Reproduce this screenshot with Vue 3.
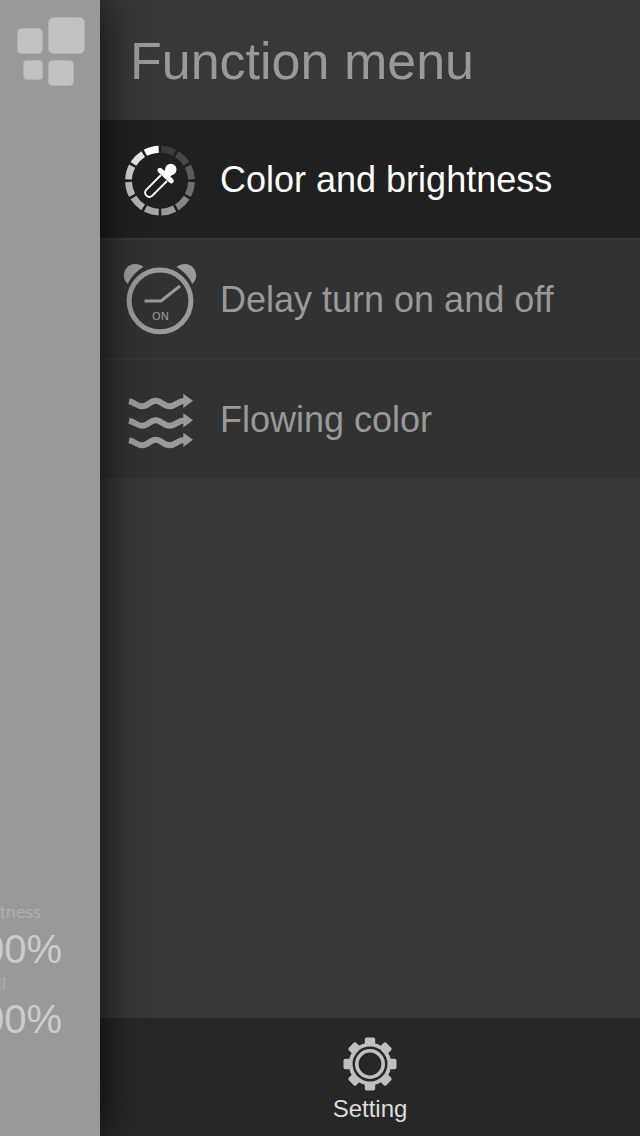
<script setup>
import { ref } from 'vue'

const active = ref('color')
const items = [
  { id: 'color', label: 'Color and brightness' },
  { id: 'delay', label: 'Delay turn on and off' },
  { id: 'flow', label: 'Flowing color' },
]
const readouts = [
  { id: 'brightness', label: 'Brightness', value: '100%' },
  { id: 'overall', label: 'Overall', value: '100%' },
]
const segments = [
  '#3c3c3c', '#484848', '#5a5a5a', '#707070', '#868686', '#999999',
  '#a6a6a6', '#b2b2b2', '#c0c0c0', '#d2d2d2', '#e8e8e8', '#ffffff',
]
const waves = [22, 41.5, 61]
const teeth = [0, 45, 90, 135, 180, 225, 270, 315]
</script>

<template>
  <div class="screen">
    <section class="page" aria-label="Current page">
      <button class="toggle" type="button" aria-label="Toggle menu">
        <svg width="70" height="70" viewBox="0 0 70 70" fill="#c2c2c2" stroke="#b2b2b2" stroke-width="1">
          <rect x="2.5" y="13.5" width="25" height="25" rx="4" />
          <rect x="33.5" y="2.5" width="36" height="36" rx="5" />
          <rect x="8.5" y="45.5" width="19" height="19" rx="3" />
          <rect x="33.5" y="45.5" width="25" height="25" rx="4" />
        </svg>
      </button>
      <dl class="readouts">
        <div v-for="r in readouts" :key="r.id" class="readout" :class="r.id">
          <dt>{{ r.label }}</dt>
          <dd>{{ r.value }}</dd>
        </div>
      </dl>
    </section>

    <div class="menu">
      <header class="head"><h1>Function menu</h1></header>
      <nav class="list" aria-label="Function menu">
        <button
          v-for="item in items"
          :key="item.id"
          type="button"
          class="item"
          :class="{ active: active === item.id }"
          @click="active = item.id"
        >
          <svg v-if="item.id === 'color'" class="icon" viewBox="0 0 80 80">
            <path
              v-for="(c, i) in segments"
              :key="i"
              d="M41.3 10.2A31.5 31.5 0 0 1 54.6 13.8"
              fill="none"
              :stroke="c"
              stroke-width="6.8"
              :transform="`rotate(${i * 30} 40 41.7)`"
            />
            <path d="M41 36 26 51a4.300 4.300 0 0 0 6 6L47 42" fill="none" stroke="#fff" stroke-width="1.800" />
            <path d="M40 31.300 51.300 41.800" stroke="#fff" stroke-width="5" stroke-linecap="round" />
            <path d="M43.500 33 47.500 27.500 54.500 34 49 38.500z" fill="#fff" />
            <circle cx="50.800" cy="30.500" r="5.700" fill="#fff" />
          </svg>
          <svg v-else-if="item.id === 'delay'" class="icon" viewBox="0 0 80 80">
            <circle cx="40" cy="41.800" r="30.900" fill="none" stroke="#9a9a9a" stroke-width="5" />
            <path d="M7.700 25A11 11 0 0 1 5 11.500C8 4.500 17 2.800 23.500 8A37 37 0 0 0 7.700 25z" fill="#9a9a9a" />
            <path d="M72.300 25A11 11 0 0 0 75 11.500C72 4.500 63 2.800 56.500 8A37 37 0 0 1 72.300 25z" fill="#9a9a9a" />
            <path d="M24.500 42H41L60 27" fill="none" stroke="#9a9a9a" stroke-width="3" />
            <text x="40.500" y="60.500" text-anchor="middle" class="on">ON</text>
          </svg>
          <svg v-else class="icon" viewBox="0 0 80 80">
            <g v-for="y in waves" :key="y" :transform="`translate(0 ${y})`">
              <path
                d="M9 .3C15 1.500 17 5.300 22.300 5.300S30.500-.2 35.700-.2s8.300 5.500 14 5.500S57.500 0 64.500 0"
                fill="none"
                stroke="#9a9a9a"
                stroke-width="6"
              />
              <path d="M63.300-7.300 73-.2 63.300 7z" fill="#9a9a9a" />
            </g>
          </svg>
          <span>{{ item.label }}</span>
        </button>
      </nav>
      <footer class="foot">
        <button type="button" class="setting">
          <svg width="54" height="54" viewBox="0 0 54 54">
            <path
              v-for="a in teeth"
              :key="a"
              d="M23.600.500h6.800q1.800 0 1.800 1.800V10H21.800V2.300q0-1.800 1.800-1.800z"
              fill="#c0c0c0"
              :transform="`rotate(${a} 27 27)`"
            />
            <circle cx="27" cy="27" r="21.300" fill="#c0c0c0" />
            <circle cx="27" cy="27" r="17.500" fill="#272727" />
            <circle cx="27" cy="27" r="13.200" fill="none" stroke="#c0c0c0" stroke-width="3.600" />
          </svg>
          <span>Setting</span>
        </button>
      </footer>
    </div>
  </div>
</template>

<style>
body {
  background: #383838;
}
</style>

<style scoped>
.screen {
  display: flex;
  min-height: 100vh;
  font-family: "Liberation Sans", Arial, sans-serif;
}
button {
  border: 0;
  padding: 0;
  background: none;
  color: inherit;
  font: inherit;
  cursor: pointer;
}
svg {
  display: block;
}
.page {
  position: relative;
  z-index: 1;
  flex: none;
  width: 100px;
  display: flex;
  flex-direction: column;
  justify-content: space-between;
  background: #999;
  box-shadow: 0 0 44px rgba(0, 0, 0, 0.85);
}
.toggle {
  margin: 15px 0 0 15px;
  width: 70px;
}
.toggle svg {
  overflow: visible;
}
.readouts {
  margin: 0 0 94px;
  overflow: hidden;
}
.readout {
  display: flex;
  flex-direction: column;
  align-items: flex-end;
}
dt {
  padding: 0 59px 6px 0;
  font: 18px/18px Lato, sans-serif;
  color: #b0b0b0;
}
.overall dt {
  padding: 2px 94px 4px 0;
}
dd {
  margin: 0;
  padding-right: 38px;
  font-size: 40px;
  line-height: 46px;
  color: #ccc;
}
.menu {
  flex: 1;
  min-width: 0;
  display: flex;
  flex-direction: column;
  background: #383838;
}
.head {
  padding: 2px 30px 0;
}
h1 {
  margin: 0;
  font-size: 52px;
  font-weight: 400;
  line-height: 118px;
  color: #999;
}
.list {
  display: flex;
  flex-direction: column;
  gap: 2px;
}
.item {
  display: flex;
  align-items: center;
  gap: 20px;
  min-height: 118px;
  padding: 0 20px;
  background: #323232;
  color: #999;
  font-size: 36px;
  text-align: left;
}
.item span {
  padding-top: 2px;
}
.item.active {
  background: #202020;
  color: #fff;
}
.icon {
  flex: none;
  width: 80px;
  height: 80px;
}
.on {
  font: 11px "DejaVu Sans", sans-serif;
  fill: #9a9a9a;
}
.foot {
  margin-top: auto;
  display: flex;
  justify-content: center;
  background: #272727;
}
.setting {
  display: flex;
  flex-direction: column;
  align-items: center;
  gap: 4px;
  padding: 19px 20px 13px;
  color: #ddd;
  font-size: 24px;
  line-height: 28px;
}
</style>
